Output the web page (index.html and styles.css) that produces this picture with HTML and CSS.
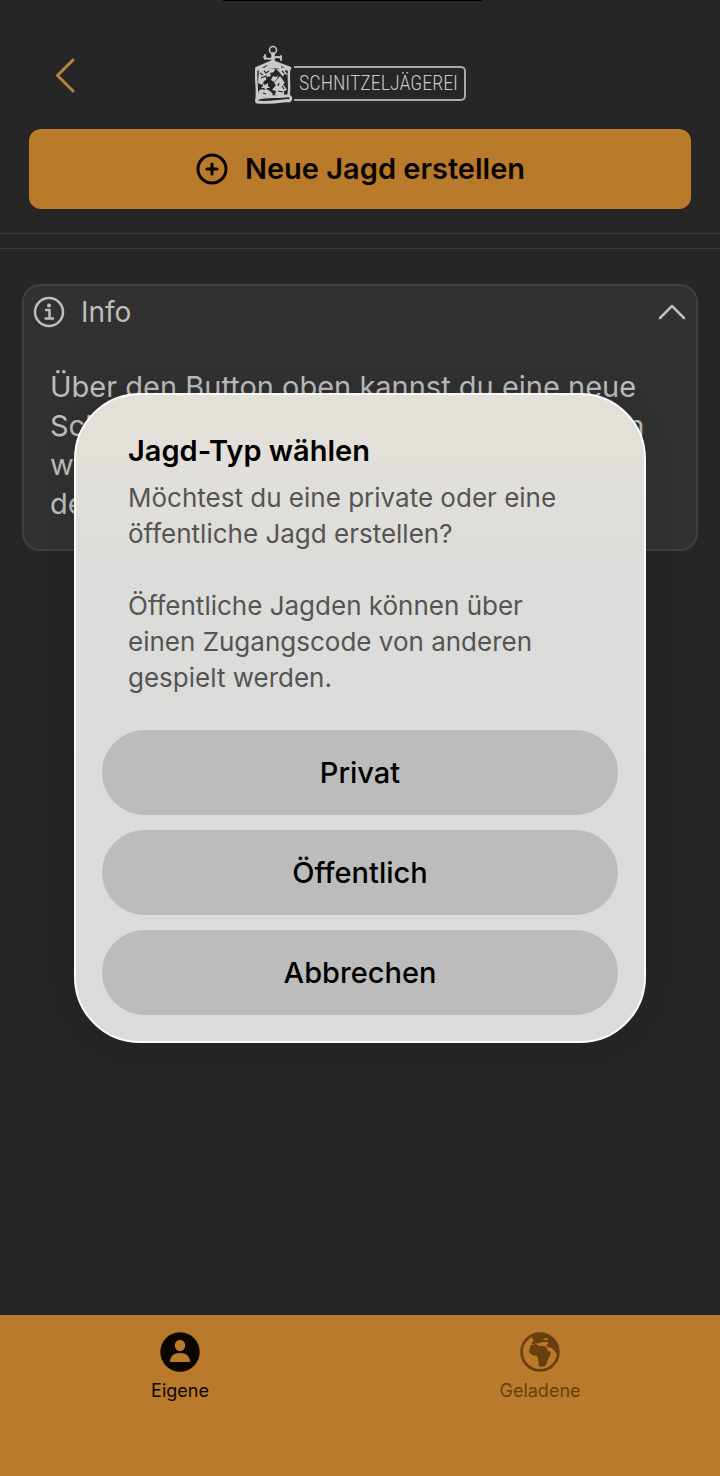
FILE: index.html
```html
<!DOCTYPE html>
<html lang="de">
<head>
<meta charset="utf-8">
<meta name="viewport" content="width=device-width, initial-scale=1">
<title>Schnitzeljägerei</title>
<link rel="stylesheet" href="styles.css">
</head>
<body>
<div class="app">
  <div class="island"></div>
  <header class="header">
    <button class="back" type="button" aria-label="Zurück">
      <svg width="24" height="36" viewBox="0 0 24 36"><path d="M21 3 5.500 18.500 21 34"/></svg>
    </button>
    <div class="logo">
      <svg class="emblem" width="40" height="60" viewBox="0 0 40 60">
        <g fill="none" stroke="#c9c9c7" stroke-linecap="round" stroke-linejoin="round">
          <circle cx="19" cy="5" r="3.500" stroke-width="1.500"/>
          <path d="M19 9v11" stroke-width="3.500"/>
          <path d="M10 12q4 3 9 1t8 0M11 10v4M27 11v4" stroke-width="1.800"/>
          <path d="M17 17 3 23M20 17l16 6M17 19 8 27M21 19l8 7M14 22h12M3 24h7M29 24h6" stroke-width="2.800"/>
          <path d="M2.500 23C1 34 4 43 2.500 55M35.500 23c-2 10 1 18-1 27" stroke-width="2.400"/>
          <path d="M4 53.500c8-3 20-1 31-3M3 57c9 1 19 0 31-1.500M35 51c3 1 2 5-1 5M4 54c-2 1-2 3 0 3" stroke-width="2.800"/>
        </g>
        <g fill="#c9c9c7">
          <path d="M5 25l8-2 8 1-1 3-4 1 1 3-4 1-1 3-2 1-2 4-4-2z"/>
          <path d="M26 31l5 7-2 1 4 6-3 1v4h-9l1-4-4-1 4-5-2-2z"/>
          <path d="M4 49c0-4 4-6 6-4 3-2 6 1 9 4l-2 3H4zM9 38l2 2 3-2v3l2 2-3 0-1 2-2-2-3 0 2-2zM22 24l8 1 4 5-4-1-1 3-3-4zM19 31l3 1 2-2-1 4-3 3-3-2z"/>
        </g>
        <path d="M7 33l5-2 1 3M10 26l2 2 3-2M25 38l-1 3M28 41l2 3M24 46l5 1M6 28l3 2M9 48l3 1M28 26l2 2M15 55l5-1" fill="none" stroke="#262626" stroke-width="1.200"/>
      </svg>
      <span class="wordmark">SCHNITZELJÄGEREI</span>
    </div>
  </header>

  <div class="actions">
    <button class="create" type="button">
      <svg width="34" height="34" viewBox="0 0 34 34"><circle cx="17" cy="17" r="14"/><path d="M17 12v10M12 17h10"/></svg>
      <span>Neue Jagd erstellen</span>
    </button>
  </div>
  <div class="divider"></div>

  <main class="content">
    <section class="info">
      <button class="info-head" type="button" aria-expanded="true">
        <svg width="32" height="32" viewBox="0 0 32 32"><circle cx="16" cy="16" r="14"/><path d="M13 14h3.500v8.500M12.500 22.500h7.500"/><circle class="dot" cx="16" cy="9.500" r="2"/></svg>
        <span class="info-title">Info</span>
        <svg width="30" height="20" viewBox="0 0 30 20"><path d="M3 16 15 4l12 12"/></svg>
      </button>
      <p class="info-text">Über den Button oben kannst du eine neue<br>Schnitzeljagd erstellen oder veröffentlichen<br>weiter unten bearbeiten und mit<br>dem Code teilen.</p>
    </section>
  </main>

  <nav class="tabs">
    <a class="tab active" href="#eigene">
      <svg width="40" height="40" viewBox="0 0 40 40"><circle cx="20" cy="20" r="19.700"/><g fill="#b97a2c"><ellipse cx="20" cy="13.500" rx="5.200" ry="5.700"/><path d="M10 30c0-6 4-9 10-9s10 3 10 9z"/></g></svg>
      <span>Eigene</span>
    </a>
    <a class="tab" href="#geladene">
      <svg width="40" height="40" viewBox="0 0 40 40"><circle cx="20" cy="20" r="18.400" fill="none" stroke="currentColor" stroke-width="2.600"/><path d="M12 5C18 1 26 1 31 5c4 3 7 8 7.500 14l-2 3-2-3-3-3-4-1-1-2 2-2-1-1h-5l-2 1-8 1-1-1 2-2z"/><path d="M11 13l5-1 3 2h5l2 1 2 4 3 1-1 4-2 3-1 4-2 3-4 1-2-1-1-7-1-3-5-1-3-3 1-5z"/><path d="M23 7l4-1 1 2h-4z" fill="#b97a2c"/></svg>
      <span>Geladene</span>
    </a>
  </nav>

  <div class="overlay">
    <div class="dialog" role="dialog" aria-modal="true" aria-labelledby="dialog-title">
      <div class="dialog-text">
        <h1 id="dialog-title">Jagd-Typ wählen</h1>
        <p>Möchtest du eine private oder eine öffentliche Jagd erstellen?</p>
        <p>Öffentliche Jagden können über einen Zugangscode von anderen gespielt werden.</p>
      </div>
      <button class="choice" type="button">Privat</button>
      <button class="choice" type="button">Öffentlich</button>
      <button class="choice" type="button">Abbrechen</button>
    </div>
  </div>
</div>
</body>
</html>
```
FILE: styles.css
```css
* { box-sizing: border-box; }

body {
  margin: 0;
  background: #262626;
  font-family: Inter, "Liberation Sans", sans-serif;
}

button {
  border: 0;
  margin: 0;
  font: inherit;
  color: inherit;
}

svg { display: block; flex: none; }

.app {
  position: relative;
  min-height: 100vh;
  display: flex;
  flex-direction: column;
}

.island {
  position: absolute;
  top: 0;
  left: 31%;
  width: 36%;
  height: 1px;
  background: #000;
}

.header {
  display: grid;
  grid-template-columns: 1fr auto 1fr;
  align-items: center;
  padding: 45px 52px 24px;
}

.back {
  justify-self: start;
  padding: 0;
  background: none;
}

.back path {
  fill: none;
  stroke: #b9803f;
  stroke-width: 3;
  stroke-linecap: round;
  stroke-linejoin: round;
}

.logo {
  display: flex;
  align-items: flex-end;
}

.wordmark {
  border: 2px solid #a9a9a7;
  border-left: 0;
  border-radius: 0 5px 5px 0;
  margin-bottom: 4px;
  padding: 0 6px 0 5px;
  font-family: "Roboto Condensed", "Liberation Sans Narrow", Roboto, sans-serif;
  font-size: 20px;
  font-weight: 300;
  line-height: 31px;
  color: #c9c9c7;
}

.actions { padding: 0 29px 24px; }

.create {
  width: 100%;
  display: flex;
  align-items: center;
  justify-content: center;
  gap: 16px;
  padding: 20px;
  border-radius: 12px;
  background: #b97a2c;
  color: #0a0500;
  font-size: 29px;
  font-weight: 600;
  line-height: 40px;
}

.create svg {
  fill: none;
  stroke: currentColor;
  stroke-width: 3;
  stroke-linecap: round;
}

.divider {
  height: 16px;
  border: solid #3a3a3a;
  border-width: 1px 0;
}

.content {
  flex: 1;
  padding: 35px 22px;
}

.info {
  border: 2px solid #404040;
  border-radius: 18px;
  background: #313131;
  color: #bdbdbd;
  font-size: 29px;
  line-height: 39px;
}

.info-head {
  width: 100%;
  display: flex;
  align-items: center;
  padding: 6px 9px;
  gap: 16px;
  background: none;
  font-size: 28px;
  line-height: 40px;
  text-align: left;
}

.info-title { flex: 1; }

.info-head svg {
  fill: none;
  stroke: currentColor;
  stroke-width: 2.5;
  stroke-linecap: round;
  stroke-linejoin: round;
}

.info-head .dot { fill: currentColor; stroke: none; }

.info-text {
  margin: 0;
  padding: 29px 26px 26px;
  white-space: nowrap;
}

.tabs {
  display: flex;
  min-height: 161px;
  padding-top: 17px;
  background: #b97a2c;
}

.tab {
  flex: 1;
  display: flex;
  flex-direction: column;
  align-items: center;
  gap: 7px;
  color: #693f0d;
  font-size: 18px;
  line-height: 24px;
  text-decoration: none;
}

.tab.active { color: #0a0500; }
.tab svg { fill: currentColor; }

.overlay {
  position: absolute;
  inset: 0;
  display: flex;
  align-items: center;
  justify-content: center;
  padding: 0 74px 40px;
}

.dialog {
  width: 100%;
  display: flex;
  flex-direction: column;
  gap: 15px;
  padding: 36px 26px 26px;
  border: 2px solid #fafafa;
  border-radius: 66px;
  background: linear-gradient(#e5e0d8 0, #e1dfda 90px, #dcdcda 180px, #dbdbdb 360px);
  box-shadow: 0 0 30px rgba(0, 0, 0, 0.12);
}

.dialog-text {
  padding: 0 26px 19px;
  color: #555452;
  font-size: 26px;
  line-height: 36px;
}

.dialog-text h1 {
  margin: 0 0 9px;
  color: #000;
  font-size: 29px;
  font-weight: 600;
  line-height: 40px;
}

.dialog-text p { margin: 0; }
.dialog-text p + p { margin-top: 36px; }

.choice {
  padding: 22px;
  border-radius: 43px;
  background: #bcbcbc;
  color: #000;
  font-size: 29px;
  font-weight: 500;
  line-height: 41px;
}
```
